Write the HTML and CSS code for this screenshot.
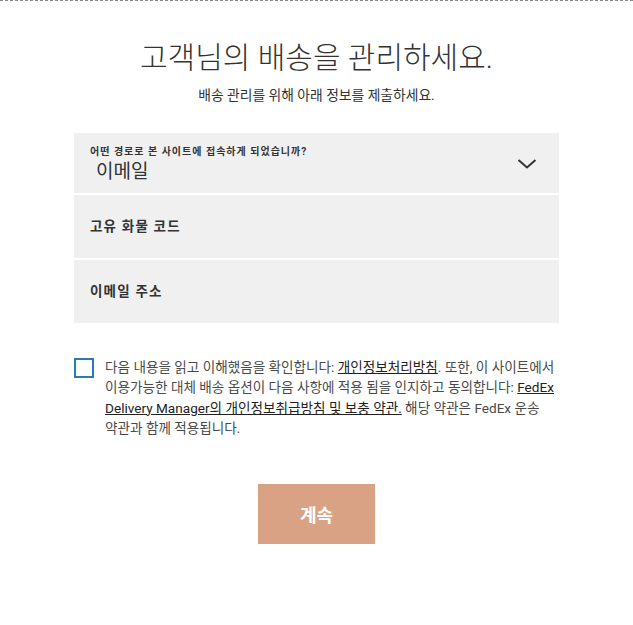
FILE: index.html
```html
<!DOCTYPE html>
<html lang="ko">
<head>
<meta charset="utf-8">
<link rel="stylesheet" href="styles.css">
</head>
<body>
<div class="page">
  <h1 class="title">고객님의 배송을 관리하세요.</h1>
  <p class="subtitle">배송 관리를 위해 아래 정보를 제출하세요.</p>
  <div class="fields">
    <div class="field field-select">
      <div class="select-text">
        <span class="small-label">어떤 경로로 본 사이트에 접속하게 되었습니까?</span>
        <span class="select-value">이메일</span>
      </div>
      <svg class="chevron" width="20" height="12" viewBox="0 0 20 12"><path d="M1.5 2 L10 9.5 L18.5 2" fill="none" stroke="#333" stroke-width="2"/></svg>
    </div>
    <div class="field"><span class="field-label">고유 화물 코드</span></div>
    <div class="field"><span class="field-label">이메일 주소</span></div>
  </div>
  <div class="consent">
    <span class="checkbox"></span>
    <p class="consent-text">다음 내용을 읽고 이해했음을 확인합니다: <a class="link">개인정보처리방침</a>. 또한, 이 사이트에서 이용가능한 대체 배송 옵션이 다음 사항에 적용 됨을 인지하고 동의합니다: <a class="link">FedEx Delivery Manager의 개인정보취급방침 및 보충 약관.</a> 해당 약관은 FedEx 운송 약관과 함께 적용됩니다.</p>
  </div>
  <div class="actions">
    <button class="btn">계속</button>
  </div>
</div>
</body>
</html>
```
FILE: styles.css
```css
html, body {
  margin: 0;
  padding: 0;
  background: #fff;
}
body {
  font-family: Roboto, "Noto Sans CJK KR", sans-serif;
  color: #333;
}
.page {
  border-top: 1px dashed #8a8a8a;
  height: 624px;
  display: flex;
  flex-direction: column;
  align-items: center;
}
.title {
  margin: 35px 0 0;
  font-size: 30px;
  font-weight: 300;
  line-height: 44px;
  color: #333;
  letter-spacing: 0;
}
.subtitle {
  margin: 5px 0 0;
  font-size: 13.8px;
  line-height: 20px;
  color: #333;
  font-weight: 400;
}
.fields {
  margin-top: 28px;
  width: 485px;
  display: flex;
  flex-direction: column;
  gap: 2px;
}
.field {
  background: #f0f0f0;
  height: 63px;
  display: flex;
  align-items: center;
  padding: 0 16px;
  box-sizing: border-box;
}
.field-select {
  height: 60px;
  justify-content: space-between;
  padding-right: 22px;
}
.select-text {
  display: flex;
  flex-direction: column;
  margin-top: 2px;
}
.small-label {
  font-size: 10px;
  font-weight: 700;
  line-height: 16px;
  letter-spacing: 1px;
  color: #333;
}
.select-value {
  font-size: 19px;
  line-height: 24px;
  padding-left: 6px;
  color: #333;
}
.chevron {
  margin-top: 2px;
}
.field-label {
  font-size: 13.5px;
  font-weight: 700;
  letter-spacing: 1.2px;
  color: #333;
  margin-top: -3px;
}
.consent {
  margin-top: 34px;
  width: 485px;
  display: flex;
  gap: 11px;
}
.checkbox {
  flex: none;
  width: 20px;
  height: 20px;
  box-sizing: border-box;
  border: 2px solid #2a7ab5;
  margin-top: 1px;
}
.consent-text {
  margin: 0;
  font-size: 13.6px;
  line-height: 20.3px;
  color: #4a4a4a;
  word-break: keep-all;
}
.link {
  color: #222;
  text-decoration: underline;
}
.actions {
  margin-top: 46px;
}
.btn {
  width: 117px;
  height: 60px;
  border: none;
  background: #d9a284;
  color: #fff;
  font-family: "Noto Sans CJK KR", sans-serif;
  font-size: 18px;
  font-weight: 700;
  cursor: pointer;
}
```
